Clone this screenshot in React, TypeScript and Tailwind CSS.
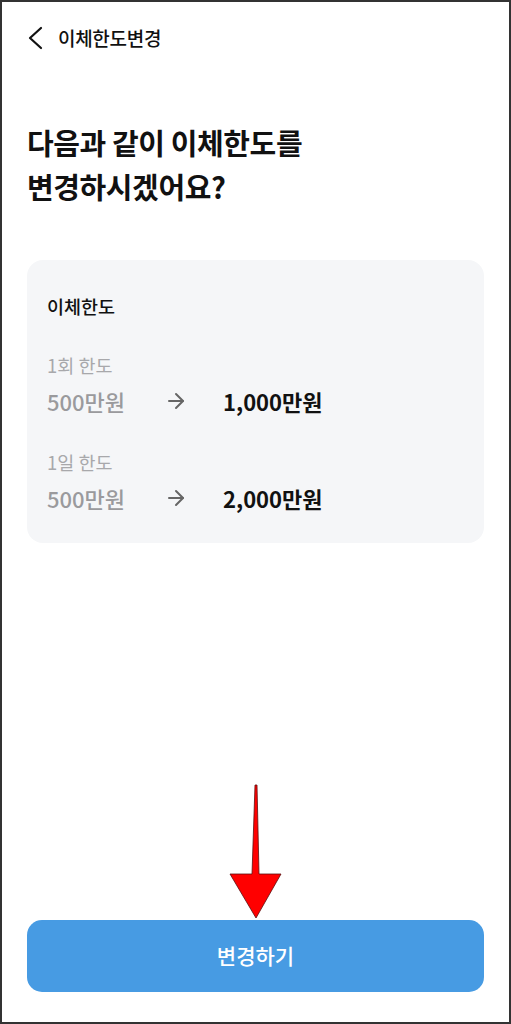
import { ArrowRight } from "lucide-react";

const limits = [
  { label: "1회 한도", from: "500만원", to: "1,000만원" },
  { label: "1일 한도", from: "500만원", to: "2,000만원" },
];

export default function App() {
  return (
    <div
      className="relative flex h-[1024px] w-[511px] flex-col border-2 border-[#333] bg-white text-[#111]"
      style={{ fontFamily: '"Noto Sans CJK KR", "Noto Sans", sans-serif' }}
    >
      {/* header */}
      <div className="flex h-[72px] items-center pl-[25px]">
        <svg width="16" height="24" viewBox="0 0 16 24" fill="none">
          <path d="M14 2 L3 12 L14 22" stroke="#111" strokeWidth="2.2" strokeLinecap="round" strokeLinejoin="round" />
        </svg>
        <span className="ml-[15px] text-[19px] font-medium tracking-[-0.3px]">이체한도변경</span>
      </div>

      <h1 className="mt-[46px] pl-[25px] text-[29px] font-bold leading-[44px] tracking-[-0.4px]">
        다음과 같이 이체한도를
        <br />
        변경하시겠어요?
      </h1>

      {/* limit card */}
      <div className="mx-[25px] mt-[52px] rounded-[16px] bg-[#f5f6f8] px-[20px] pb-[30px] pt-[33px]">
        <div className="text-[18.5px] font-medium leading-[26px]">이체한도</div>
        <div className="mt-[33px] flex flex-col gap-[33px]">
          {limits.map((l) => (
            <div key={l.label}>
              <div className="text-[18.5px] leading-[26px] text-[#a8a8ab]">{l.label}</div>
              <div className="mt-[8px] flex h-[30px] items-center text-[22px] leading-[30px]">
                <span className="w-[117px] font-medium text-[#9a9a9d]">{l.from}</span>
                <ArrowRight size={24} strokeWidth={2} className="text-[#666]" />
                <span className="ml-[35px] font-bold text-[#111]">{l.to}</span>
              </div>
            </div>
          ))}
        </div>
      </div>

      <div className="flex-1" />

      {/* confirm button */}
      <div className="relative mx-[25px] mb-[30px]">
        <svg
          className="absolute left-[201px] top-[-136px]"
          width="56"
          height="136"
          viewBox="0 0 56 136"
          fill="none"
        >
          <path
            d="M27 1 L29 1 L31 90 L53 90 L28 134 L2 90 L24 90 Z"
            fill="#ff0000"
            stroke="#5a1010"
            strokeWidth="0.8"
            strokeLinejoin="miter"
          />
        </svg>
        <button className="flex h-[72px] w-full items-center justify-center rounded-[15px] bg-[#479be3] text-[21px] font-medium text-white">
          변경하기
        </button>
      </div>
    </div>
  );
}
